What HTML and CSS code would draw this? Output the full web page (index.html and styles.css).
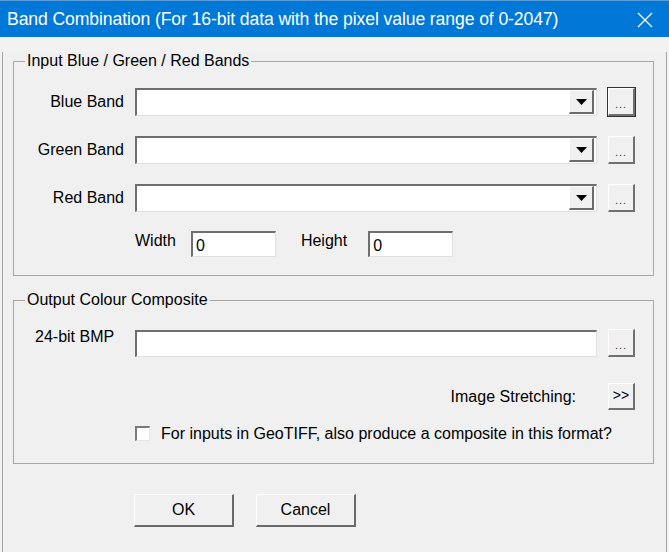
FILE: index.html
```html
<!DOCTYPE html>
<html lang="en">
<head>
    <meta charset="UTF-8">
    <meta name="viewport" content="width=device-width, initial-scale=1.0">
    <title>Band Combination</title>
    <link rel="stylesheet" href="styles.css">
</head>
<body>
    <div class="window">
        <div class="titlebar">
            <span class="title">Band Combination (For 16-bit data with the pixel value range of 0-2047)</span>
            <span class="close">
                <svg width="16" height="16" viewBox="0 0 16 16">
                    <path d="M1 1 L15 15 M15 1 L1 15" stroke="#fff" stroke-width="1.3" fill="none"/>
                </svg>
            </span>
        </div>
        <div class="dialog">
            <fieldset class="group group-input">
                <legend>Input Blue / Green / Red Bands</legend>

                <div class="row">
                    <label class="lbl">Blue Band</label>
                    <div class="combo">
                        <div class="combo-field"></div>
                        <span class="drop"><svg width="11" height="6" viewBox="0 0 11 6"><polygon points="0,0 11,0 5.5,6" fill="#000"/></svg></span>
                    </div>
                    <button class="dots focused">...</button>
                </div>

                <div class="row">
                    <label class="lbl">Green Band</label>
                    <div class="combo">
                        <div class="combo-field"></div>
                        <span class="drop"><svg width="11" height="6" viewBox="0 0 11 6"><polygon points="0,0 11,0 5.5,6" fill="#000"/></svg></span>
                    </div>
                    <button class="dots">...</button>
                </div>

                <div class="row">
                    <label class="lbl">Red Band</label>
                    <div class="combo">
                        <div class="combo-field"></div>
                        <span class="drop"><svg width="11" height="6" viewBox="0 0 11 6"><polygon points="0,0 11,0 5.5,6" fill="#000"/></svg></span>
                    </div>
                    <button class="dots">...</button>
                </div>

                <div class="size-row">
                    <label class="size-lbl">Width</label>
                    <div class="size-field">0</div>
                    <label class="size-lbl height-lbl">Height</label>
                    <div class="size-field">0</div>
                </div>
            </fieldset>

            <fieldset class="group group-output">
                <legend>Output Colour Composite</legend>

                <div class="row bmp-row">
                    <label class="lbl lbl-bmp">24-bit BMP</label>
                    <div class="text-field"></div>
                    <button class="dots">...</button>
                </div>

                <div class="stretch-row">
                    <span class="stretch-lbl">Image Stretching:</span>
                    <button class="dots arrows">&gt;&gt;</button>
                </div>

                <div class="check-row">
                    <span class="checkbox"></span>
                    <span class="check-lbl">For inputs in GeoTIFF, also produce a composite in this format?</span>
                </div>
            </fieldset>

            <div class="actions">
                <button class="btn">OK</button>
                <button class="btn">Cancel</button>
            </div>
        </div>
    </div>
</body>
</html>
```

FILE: styles.css
```css
body {
    margin: 0;
    font-family: "Liberation Sans", Arial, sans-serif;
    font-size: 16px;
    color: #000;
    background-color: #f0f0f0;
}
.window {
    width: 669px;
    height: 552px;
    box-sizing: border-box;
    background-color: #f2f2f2;
    overflow: hidden;
}
.titlebar {
    height: 37px;
    background-color: #0078d7;
    color: #fff;
    display: flex;
    align-items: center;
    justify-content: space-between;
    padding: 0 16px 0 7px;
    box-sizing: border-box;
    border-top: 1px solid #5a9fdc;
}
.title {
    font-size: 17.6px;
    letter-spacing: -0.1px;
}
.close {
    display: flex;
    margin-top: 1px;
}
.dialog {
    height: 513px;
    margin: 0 2px;
    border: 1px solid #a5a5a5;
    border-top: none;
    background-color: #f0f0f0;
    padding: 0 12px 0 10px;
    box-sizing: border-box;
}
.group {
    margin: 0;
    border: 1px solid #a7a7a7;
    padding: 0 18px 0 0;
}
.group legend {
    margin-left: 11px;
    padding: 0 2px;
    line-height: 18px;
}
.group-input {
    margin-top: 15px;
    padding-top: 18px;
    padding-bottom: 18px;
}
.group-output {
    margin-top: 15px;
    padding-top: 20px;
    padding-bottom: 20px;
}
.row {
    display: flex;
    align-items: center;
    height: 28px;
    margin-bottom: 20px;
}
.lbl {
    width: 110px;
    text-align: right;
    margin-right: 11px;
}
.lbl-bmp {
    text-align: left;
    padding-left: 21px;
    box-sizing: border-box;
    width: 110px;
    margin-top: -12px;
}
.combo {
    width: 462px;
    height: 28px;
    box-sizing: border-box;
    background-color: #fff;
    border-top: 2px solid #6e6e6e;
    border-left: 2px solid #6e6e6e;
    border-right: 1px solid #e0e0e0;
    border-bottom: 1px solid #e0e0e0;
    display: flex;
    justify-content: flex-end;
    align-items: stretch;
    padding: 0 2px 1px 0;
}
.combo-field {
    flex: 1;
}
.drop {
    width: 25px;
    background-color: #f0f0f0;
    border-top: 1px solid #fff;
    border-left: 1px solid #fff;
    border-right: 2px solid #6a6a6a;
    border-bottom: 2px solid #6a6a6a;
    box-sizing: border-box;
    display: flex;
    align-items: center;
    justify-content: center;
}
.dots {
    margin-left: 11px;
    width: 27px;
    height: 28px;
    padding: 0 0 4px 0;
    font-family: "Liberation Sans", Arial, sans-serif;
    font-size: 11px;
    letter-spacing: 1px;
    color: #333;
    background-color: #f0f0f0;
    border-top: 1px solid #fff;
    border-left: 1px solid #fff;
    border-right: 2px solid #707070;
    border-bottom: 2px solid #707070;
    display: flex;
    align-items: flex-end;
    justify-content: center;
    box-sizing: border-box;
}
.dots.focused {
    outline: 1px solid #333;
}
.size-row {
    display: flex;
    align-items: center;
    margin-top: -1px;
    padding-left: 121px;
    height: 26px;
}
.size-lbl {
    margin-top: -6px;
    margin-right: 15px;
}
.height-lbl {
    margin-left: 25px;
    margin-right: 21px;
}
.size-field {
    width: 85px;
    height: 26px;
    box-sizing: border-box;
    background-color: #fff;
    border-top: 2px solid #6e6e6e;
    border-left: 2px solid #6e6e6e;
    border-right: 1px solid #e0e0e0;
    border-bottom: 1px solid #e0e0e0;
    padding: 3px 0 0 3px;
    line-height: 20px;
}
.text-field {
    width: 462px;
    height: 27px;
    box-sizing: border-box;
    background-color: #fff;
    border-top: 2px solid #6e6e6e;
    border-left: 2px solid #6e6e6e;
    border-right: 1px solid #e0e0e0;
    border-bottom: 1px solid #e0e0e0;
    margin-top: 1px;
}
.bmp-row {
    margin-bottom: 26px;
}
.stretch-row {
    display: flex;
    justify-content: flex-end;
    align-items: center;
    height: 27px;
}
.stretch-lbl {
    margin-right: 21px;
    margin-top: 1px;
}
.arrows {
    height: 27px;
    font-size: 14px;
    padding-bottom: 5px;
    color: #000;
    letter-spacing: 0;
}
.check-row {
    display: flex;
    align-items: center;
    height: 19px;
    margin-top: 14px;
    padding-left: 121px;
}
.checkbox {
    width: 15px;
    height: 15px;
    box-sizing: border-box;
    background-color: #fff;
    border-top: 2px solid #7a7a7a;
    border-left: 2px solid #7a7a7a;
    border-right: 1px solid #e6e6e6;
    border-bottom: 1px solid #e6e6e6;
    margin-right: 11px;
}
.actions {
    display: flex;
    gap: 22px;
    margin-top: 30px;
    padding-left: 121px;
}
.btn {
    width: 100px;
    height: 33px;
    font-family: "Liberation Sans", Arial, sans-serif;
    font-size: 16px;
    color: #000;
    background-color: #f0f0f0;
    border-top: 1px solid #fff;
    border-left: 1px solid #fff;
    border-right: 2px solid #6a6a6a;
    border-bottom: 2px solid #6a6a6a;
    box-sizing: border-box;
    padding: 0;
}
```
